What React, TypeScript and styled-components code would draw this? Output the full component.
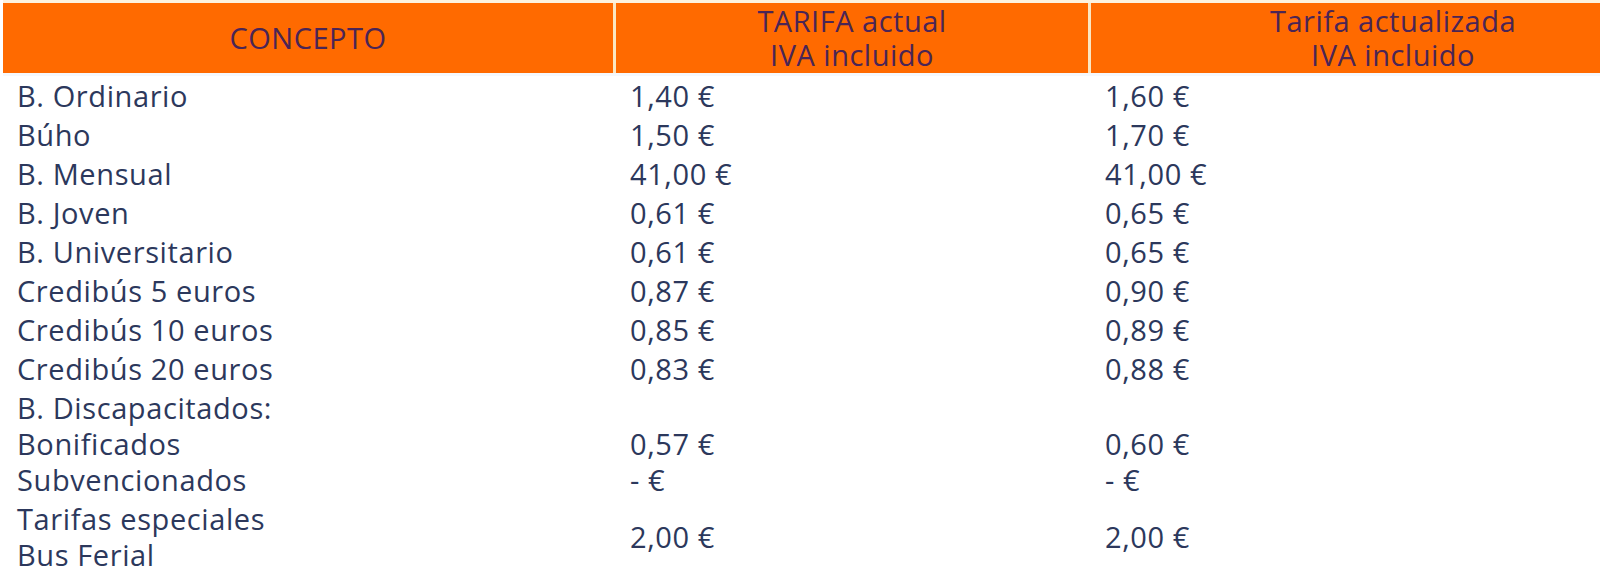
import React from "react";
import styled, { createGlobalStyle } from "styled-components";

const Global = createGlobalStyle`
  html, body {
    margin: 0;
    padding: 0;
    background: #ffffff;
    overflow: hidden;
  }
  body {
    font-family: "Open Sans", "Noto Sans", "DejaVu Sans", sans-serif;
  }
`;

const COLS = "610px 472px 604px";

const Sheet = styled.div`
  width: 1700px;
  padding: 0 0 0 3px;
  background: #ffffff;
`;

const HeaderRow = styled.div`
  display: grid;
  grid-template-columns: ${COLS};
  column-gap: 3px;
  padding-top: 3px;
  padding-bottom: 3px;
  background: linear-gradient(#fdf2df, #fdf2df) top / 100% 3px no-repeat,
    linear-gradient(#f5f8fc, #f5f8fc) bottom / 100% 3px no-repeat,
    #fbe6c2;
`;

const HeaderCell = styled.div`
  background: #ff6a00;
  color: #4a2556;
  font-size: 29px;
  letter-spacing: 0.5px;
  line-height: 34px;
  height: 70px;
  text-align: center;
  display: flex;
  align-items: center;
  justify-content: center;
`;

const Body = styled.div`
  display: grid;
  grid-template-columns: ${COLS};
  column-gap: 3px;
  row-gap: 3px;
  padding-top: 2px;
`;

const Cell = styled.div`
  color: #2c385c;
  font-size: 29px;
  letter-spacing: 0.6px;
  line-height: 36px;
  padding-left: 14px;
  display: flex;
  flex-direction: column;
  justify-content: center;
  white-space: nowrap;
`;

const Blank = styled.span`
  display: block;
  height: 36px;
`;

type Row = { concept: string[]; now: string[]; next: string[] };

const rows: Row[] = [
  { concept: ["B. Ordinario"], now: ["1,40 €"], next: ["1,60 €"] },
  { concept: ["Búho"], now: ["1,50 €"], next: ["1,70 €"] },
  { concept: ["B. Mensual"], now: ["41,00 €"], next: ["41,00 €"] },
  { concept: ["B. Joven"], now: ["0,61 €"], next: ["0,65 €"] },
  { concept: ["B. Universitario"], now: ["0,61 €"], next: ["0,65 €"] },
  { concept: ["Credibús 5 euros"], now: ["0,87 €"], next: ["0,90 €"] },
  { concept: ["Credibús 10 euros"], now: ["0,85 €"], next: ["0,89 €"] },
  { concept: ["Credibús 20 euros"], now: ["0,83 €"], next: ["0,88 €"] },
  {
    concept: ["B. Discapacitados:", "Bonificados", "Subvencionados"],
    now: ["", "0,57 €", "- €"],
    next: ["", "0,60 €", "- €"],
  },
  {
    concept: ["Tarifas especiales", "Bus Ferial"],
    now: ["2,00 €"],
    next: ["2,00 €"],
  },
];

const Lines = ({ items }: { items: string[] }) => (
  <>
    {items.map((t, i) =>
      t === "" ? <Blank key={i} /> : <span key={i}>{t}</span>
    )}
  </>
);

export default function App() {
  return (
    <>
      <Global />
      <Sheet>
        <HeaderRow>
          <HeaderCell>CONCEPTO</HeaderCell>
          <HeaderCell>
            TARIFA actual
            <br />
            IVA incluido
          </HeaderCell>
          <HeaderCell>
            Tarifa actualizada
            <br />
            IVA incluido
          </HeaderCell>
        </HeaderRow>
        <Body>
          {rows.map((r, i) => (
            <React.Fragment key={i}>
              <Cell>
                <Lines items={r.concept} />
              </Cell>
              <Cell>
                <Lines items={r.now} />
              </Cell>
              <Cell>
                <Lines items={r.next} />
              </Cell>
            </React.Fragment>
          ))}
        </Body>
      </Sheet>
    </>
  );
}
